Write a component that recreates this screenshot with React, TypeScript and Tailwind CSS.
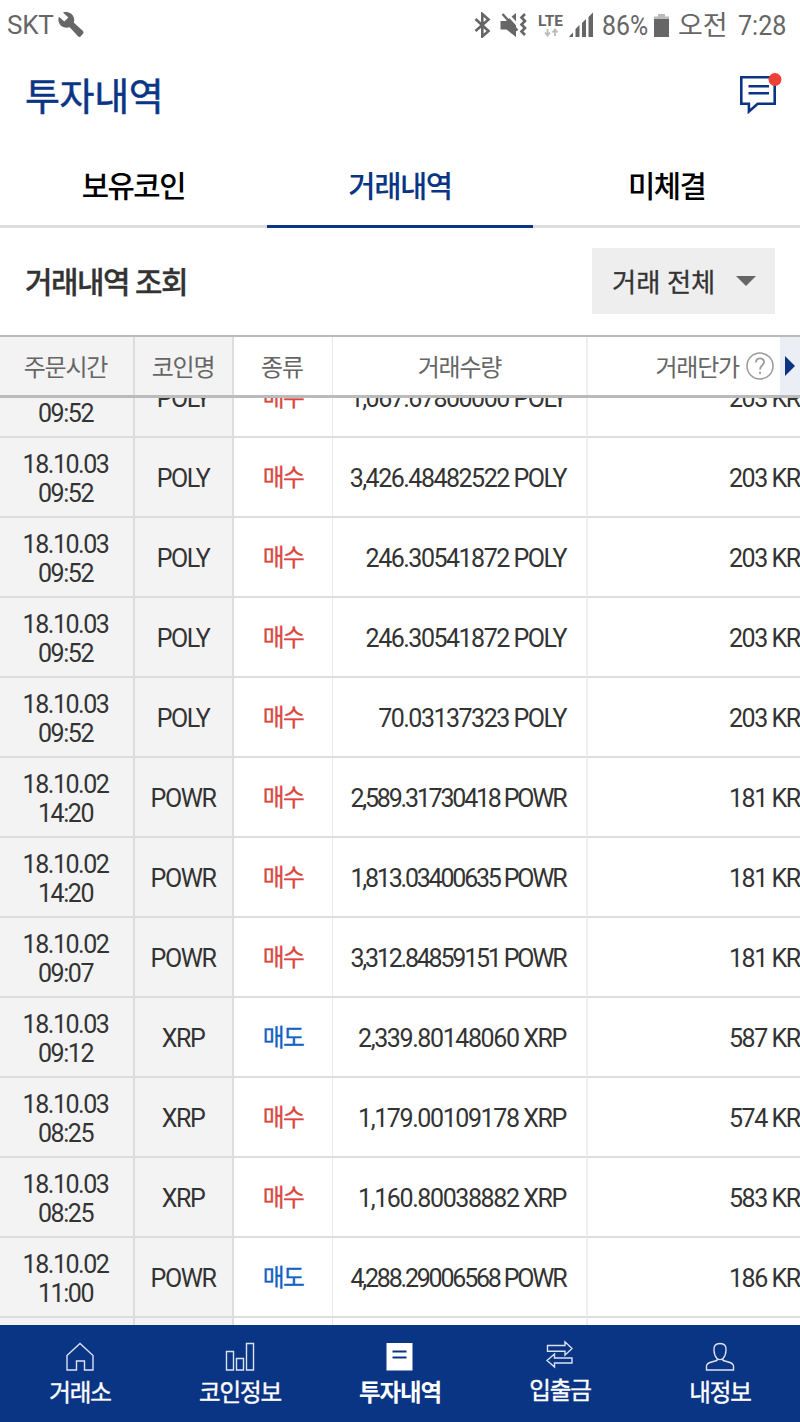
const rows = [
  ['18.10.03', '09:52', 'POLY', '매수', '1,067.67800000', '203'],
  ['18.10.03', '09:52', 'POLY', '매수', '3,426.48482522', '203'],
  ['18.10.03', '09:52', 'POLY', '매수', '246.30541872', '203'],
  ['18.10.03', '09:52', 'POLY', '매수', '246.30541872', '203'],
  ['18.10.03', '09:52', 'POLY', '매수', '70.03137323', '203'],
  ['18.10.02', '14:20', 'POWR', '매수', '2,589.31730418', '181'],
  ['18.10.02', '14:20', 'POWR', '매수', '1,813.03400635', '181'],
  ['18.10.02', '09:07', 'POWR', '매수', '3,312.84859151', '181'],
  ['18.10.03', '09:12', 'XRP', '매도', '2,339.80148060', '587'],
  ['18.10.03', '08:25', 'XRP', '매수', '1,179.00109178', '574'],
  ['18.10.03', '08:25', 'XRP', '매수', '1,160.80038882', '583'],
  ['18.10.02', '11:00', 'POWR', '매도', '4,288.29006568', '186'],
];

const columns = 'grid grid-cols-[135px_99px_99px_255px_212px]';

function StatusBar() {
  return (
    <div className="flex h-[50px] shrink-0 items-center justify-between pl-[7px] pr-[13px] text-[26px] leading-[50px] text-[#666]">
      <div className="flex items-center">
        <span className="w-[51px] tracking-[-0.01em]">SKT</span>
        <svg className="h-[26px] w-[26px]" viewBox="0 0 26 26" fill="#666">
          <path d="M5 0.6C9.6-1 14.8 1.4 16 6.2c.3 1.5.2 3-.3 4.300l9 8.300c1 .9 1 2.200.1 3.200l-2 2.300c-.8.9-2 .9-2.800 0l-8.300-9c-4.900 1.500-9.800-.7-11-5.500C.3 8 .3 6.300.9 4.700l5.400 4.700 4-3.800L5 .6z" />
        </svg>
      </div>
      <div className="flex items-center">
        <svg className="h-[26px] w-[122px]" viewBox="474 11 122 26" fill="none" stroke="#666">
          <path d="M475.500 18l13 12-6.200 5.500V13l6.200 5.500-13 11.500" strokeWidth="2.600" />
          <path d="M500.500 20h5.500l10-8v24l-9.500-7.500h-6z" fill="#666" stroke="none" />
          <path d="M506 11.500l12 13" stroke="#fff" strokeWidth="2.600" />
          <path d="M502.500 13l15 16.500" strokeWidth="2.400" />
          <path d="M525 13l-3.500 3.500 3.500 3.500-3.500 3.500 3.500 3.500-3.500 3.500 3.500 3.500" strokeWidth="2.600" />
          <text x="538" y="24.500" fontFamily="Roboto" fontSize="14.500" fontWeight="700" textLength="25" lengthAdjust="spacingAndGlyphs" fill="#666" stroke="none">LTE</text>
          <path d="M547.500 28v6M545 31.500l2.500 3 2.500-3M555 35v-6M552.500 31.500l2.500-3 2.500 3" stroke="#bbb" strokeWidth="1.800" />
          <path d="M569.500 36v-1l3.500-3.500V36zM575.500 36v-8l4-4V36zM582 36V22l4-4V36zM588.500 36V16l4.500-4.500V36z" fill="#666" stroke="none" />
        </svg>
        <span className="ml-[6px] w-[52px] pt-px text-[27px]"><span className="inline-block origin-left scale-x-[0.92]">86%</span></span>
        <svg className="h-[23px] w-[15px]" viewBox="0 0 15 23">
          <path d="M4 0h7v2.500h4V7H0V2.500h4z" fill="#bbb" />
          <path d="M0 5h15v18H0z" fill="#666" />
        </svg>
        <span className="ml-[9px] w-[60px] whitespace-nowrap pt-[2px] text-[27px]">오전</span>
        <span className="w-[49px] pt-px text-[27px]"><span className="inline-block origin-left scale-x-[0.93]">7:28</span></span>
      </div>
    </div>
  );
}

function Header() {
  return (
    <header className="flex h-[92px] shrink-0 items-center justify-between pl-[25px] pr-[18px]">
      <h1 className="pt-px text-[38px] leading-[92px] tracking-[-0.01em] text-[#0a3585] [-webkit-text-stroke:0.5px_#0a3585]">투자내역</h1>
      <svg className="mb-[6px] h-[42px] w-[42px]" viewBox="740 72 42 42" fill="none" stroke="#0a3585">
        <path d="M741.300 77.300h33.400v26.500h-17l-8.800 7.700v-7.700h-7.600z" strokeWidth="2.600" />
        <path d="M748.500 86.300h20.500M748.500 93.300h20.500" strokeWidth="2.600" />
        <circle cx="775" cy="79.500" r="6.500" fill="#ee4035" stroke="none" />
      </svg>
    </header>
  );
}

function Tabs() {
  const base = 'flex flex-1 items-center justify-center border-b-[3px] pt-[7px]';
  return (
    <nav className="flex h-[86px] shrink-0 text-[29.7px] font-medium tracking-[-0.05em]">
      <div className={`${base} border-[#ddd] text-black`}>보유코인</div>
      <div className={`${base} border-[#0a3585] text-[#0a3585]`}>거래내역</div>
      <div className={`${base} border-[#ddd] text-black`}>미체결</div>
    </nav>
  );
}

function Filter() {
  return (
    <div className="flex h-[107px] shrink-0 items-center justify-between pb-px pl-[25px] pr-[25px]">
      <h2 className="pt-[5px] text-[29.9px] font-medium tracking-[-0.05em] text-[#333] [-webkit-text-stroke:0.3px_#333]">거래내역 조회</h2>
      <button className="flex h-[66px] w-[183px] items-center justify-between bg-[#eee] pl-[20px] pr-[19px] text-[26.300px] text-[#333]">
        <span className="pt-[5px] [-webkit-text-stroke:0.3px_#333]">거래 전체</span>
        <svg className="h-[10px] w-[20px]" viewBox="0 0 20 10" fill="#666"><path d="M0 0h20L10 10z" /></svg>
      </button>
    </div>
  );
}

function Table() {
  return (
    <section className="flex min-h-0 flex-1 flex-col text-[25px] tracking-[-1.45px]">
      <div className={`${columns} h-[63px] shrink-0 border-t-2 border-b-[3px] border-[#bbb] text-[24px] leading-[62px] tracking-[-0.05em] text-[#666]`}>
        <div className="h-[58px] border-r-2 border-[#ddd] bg-[#f3f3f3] pr-[2px] text-center">주문시간</div>
        <div className="h-[58px] border-r-2 border-[#ddd] bg-[#f3f3f3] pr-px text-center">코인명</div>
        <div className="h-[58px] border-r border-[#e8e8e8] pr-[2px] text-center">종류</div>
        <div className="h-[58px] border-r-2 border-[#eee] text-center">거래수량</div>
        <div className="flex h-[58px] items-center justify-end">
          <span className="pt-[4px]">거래단가</span>
          <svg className="ml-[7px] mr-[6px] h-[28px] w-[28px]" viewBox="0 0 28 28" fill="none" stroke="#999">
            <circle cx="14" cy="14" r="13" strokeWidth="1.500" />
            <path d="M10 10.500c0-5.500 8-5.500 8-.5 0 3.300-4 3.600-4 7.500M14 19.800v2.200" strokeWidth="1.800" />
          </svg>
          <div className="flex h-full w-[20px] items-center justify-center bg-[#eceef5]">
            <svg className="h-[20px] w-[10px]" viewBox="0 0 10 20" fill="#0a3585"><path d="M0 0l10 10L0 20z" /></svg>
          </div>
        </div>
      </div>
      <div className="min-h-0 flex-1 overflow-hidden">
        <div className="-mt-[40px]">
          {rows.map(([date, time, coin, kind, amount, price], i) => (
            <div key={i} className={`${columns} h-[80px] text-[#333] *:flex *:items-center *:justify-center *:border-b-2 *:border-b-[#ddd] *:pt-[4px] *:whitespace-nowrap`}>
              <div className="flex-col border-r-2 border-r-[#ddd] bg-[#f3f3f3] pr-[2px] leading-[29px]">
                <span>{date}</span>
                <span>{time}</span>
              </div>
              <div className="border-r-2 border-r-[#ddd] bg-[#f3f3f3] pr-px">{coin}</div>
              <div className={`border-r border-r-[#e8e8e8] text-[23.700px] ${kind === '매수' ? 'text-[#d9483f] [-webkit-text-stroke:0.3px_#d9483f]' : 'text-[#1261c4] [-webkit-text-stroke:0.3px_#1261c4]'}`}>
                {kind}
              </div>
              <div className={`justify-end! border-r-2 border-r-[#eee] ${coin === 'POWR' ? 'pr-[20.500px] tracking-[-2.200px]' : coin === 'XRP' ? 'pr-[20px] tracking-[-1.400px]' : 'pr-[20px] tracking-[-1.500px]'}`}>
                {amount} {coin}
              </div>
              <div className="justify-start! overflow-hidden pl-[141px]">{price} KRW</div>
            </div>
          ))}
          <div className={`${columns} h-[80px]`}>
            <div className="border-r-2 border-r-[#ddd] bg-[#f3f3f3]" />
            <div className="border-r-2 border-r-[#ddd] bg-[#f3f3f3]" />
            <div className="border-r border-r-[#e8e8e8]" />
            <div className="border-r-2 border-r-[#eee]" />
            <div />
          </div>
        </div>
      </div>
    </section>
  );
}

function BottomNav() {
  const item = 'flex flex-1 flex-col items-center';
  const icon = 'mt-[14px] h-[34px] w-[34px]';
  const label = 'mt-[2px] [-webkit-text-stroke:0.4px_white]';
  return (
    <nav className="flex h-[97px] shrink-0 bg-[#0a3585] text-[23.5px] leading-[36px] tracking-[-0.05em] text-white">
      <div className={item}>
        <svg className={icon} viewBox="0 0 34 34" fill="none" stroke="#dbe2ef" strokeWidth="1.400">
          <path d="M4 16.500L17 4.500l13 12V31h-8.500v-9h-8v9H4z" />
        </svg>
        <span className={label}>거래소</span>
      </div>
      <div className={item}>
        <svg className={icon} viewBox="0 0 34 34" fill="none" stroke="#dbe2ef" strokeWidth="1.400">
          <path d="M3.500 12.500h7V31h-7zM13.500 19.500h7V31h-7zM23.500 4.500h7V31h-7z" />
        </svg>
        <span className={label}>코인정보</span>
      </div>
      <div className={`${item} font-bold`}>
        <svg className={icon} viewBox="0 0 34 34">
          <path d="M3.500 4h26v27.500h-26z" fill="white" />
          <path d="M9.500 12.500h14M9.500 18.500h14" stroke="#0a3585" strokeWidth="1.800" />
        </svg>
        <span className="mt-[2px]">투자내역</span>
      </div>
      <div className={item}>
        <svg className={icon} viewBox="0 0 34 34" fill="none" stroke="#dbe2ef" strokeWidth="1.400">
          <path d="M4.500 6.500h17.500V2.800l7 6.700-7 6.700v-4H4.500zM29 19h-17.500v-4L4 21.500l7.500 6.500v-4H29z" />
        </svg>
        <span className="[-webkit-text-stroke:0.4px_white]">입출금</span>
      </div>
      <div className={item}>
        <svg className={icon} viewBox="0 0 34 34" fill="none" stroke="#dbe2ef" strokeWidth="1.400">
          <path d="M17 4.500c-4.500 0-6.500 2.500-6 7 .2 4 1.500 6.500 3 8v2c-6 2-10 1.500-10.500 5.500V31h27v-4c-.5-4-4.500-3.500-10.500-5.500v-2c1.500-1.500 2.800-4 3-8 .5-4.500-1.500-7-6-7zM14 19.500c2 1.500 4 1.500 6 0" />
        </svg>
        <span className={label}>내정보</span>
      </div>
    </nav>
  );
}

export default function App() {
  return (
    <main className="flex h-[1422px] w-[800px] flex-col overflow-hidden bg-white font-['Roboto','Noto_Sans_CJK_KR',sans-serif]">
      <StatusBar />
      <Header />
      <Tabs />
      <Filter />
      <Table />
      <BottomNav />
    </main>
  );
}
